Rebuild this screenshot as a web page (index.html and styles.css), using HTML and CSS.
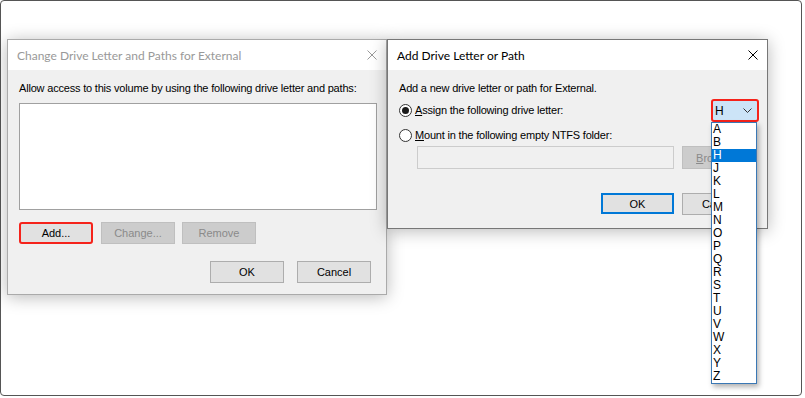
FILE: index.html
```html
<!DOCTYPE html>
<html lang="en">
<head>
    <meta charset="UTF-8">
    <meta name="viewport" content="width=device-width, initial-scale=1.0">
    <title>Add Drive Letter or Path</title>
    <link rel="stylesheet" href="styles.css">
</head>
<body>
    <div class="desktop">

        <!-- Change Drive Letter dialog (inactive) -->
        <div class="window win-paths">
            <div class="titlebar">
                <span class="title">Change Drive Letter and Paths for External</span>
                <svg class="close" width="10" height="10" viewBox="0 0 10 10"><path d="M0.5 0.5L9.5 9.5M9.5 0.5L0.5 9.5" stroke="currentColor" stroke-width="1"/></svg>
            </div>
            <div class="content">
                <p class="label">Allow access to this volume by using the following drive letter and paths:</p>
                <div class="listbox"></div>
                <div class="actions">
                    <button class="btn marked">Add...</button>
                    <button class="btn" disabled>Change...</button>
                    <button class="btn" disabled>Remove</button>
                </div>
                <div class="footer">
                    <button class="btn">OK</button>
                    <button class="btn">Cancel</button>
                </div>
            </div>
        </div>

        <!-- Add Drive Letter or Path dialog (active) -->
        <div class="window win-add">
            <div class="titlebar">
                <span class="title">Add Drive Letter or Path</span>
                <svg class="close" width="10" height="10" viewBox="0 0 10 10"><path d="M0.5 0.5L9.5 9.5M9.5 0.5L0.5 9.5" stroke="currentColor" stroke-width="1"/></svg>
            </div>
            <div class="content">
                <p class="label">Add a new drive letter or path for External.</p>
                <div class="option option-letter">
                    <label class="radio-label"><span class="radio checked"></span><span><u>A</u>ssign the following drive letter:</span></label>
                    <div class="combo">
                        <span>H</span>
                        <svg width="9" height="5" viewBox="0 0 9 5"><path d="M0.5 0.5L4.5 4.5L8.5 0.5" fill="none" stroke="#333" stroke-width="1"/></svg>
                    </div>
                </div>
                <div class="option">
                    <label class="radio-label"><span class="radio"></span><span><u>M</u>ount in the following empty NTFS folder:</span></label>
                </div>
                <div class="folder-row">
                    <div class="field"></div>
                    <button class="btn" disabled><u>B</u>rowse...</button>
                </div>
                <div class="footer">
                    <button class="btn default">OK</button>
                    <button class="btn">Cancel</button>
                </div>
            </div>

            <ul class="droplist">
                <li>A</li>
                <li>B</li>
                <li class="selected">H</li>
                <li>J</li>
                <li>K</li>
                <li>L</li>
                <li>M</li>
                <li>N</li>
                <li>O</li>
                <li>P</li>
                <li>Q</li>
                <li>R</li>
                <li>S</li>
                <li>T</li>
                <li>U</li>
                <li>V</li>
                <li>W</li>
                <li>X</li>
                <li>Y</li>
                <li>Z</li>
            </ul>
        </div>

    </div>
</body>
</html>
```

FILE: styles.css
```css
body{
    margin: 0;
    padding: 0;
    font-family: "Liberation Sans", Arial, sans-serif;
    font-size: 11px;
    color: #000;
}
.desktop{
    position: relative;
    width: 802px;
    height: 396px;
    box-sizing: border-box;
    border: 1px solid #555;
    border-radius: 4px;
    background-color: #fff;
}

/* windows */
.window{
    position: absolute;
    box-sizing: border-box;
    background-color: #f0f0f0;
    border: 1px solid #aaa;
    box-shadow: 0 2px 16px rgba(0, 0, 0, 0.28);
}
.win-paths{
    left: 6px;
    top: 38px;
    width: 380px;
    height: 256px;
}
.win-add{
    left: 386px;
    top: 38px;
    width: 381px;
    height: 190px;
    border-color: #777;
}
.titlebar{
    display: flex;
    align-items: center;
    justify-content: space-between;
    height: 30px;
    padding: 0 9px 0 9px;
    background-color: #fff;
    font-family: Lato, "Noto Sans", sans-serif;
    font-size: 12px;
}
.win-paths .titlebar{
    color: #999;
}
.close{
    display: block;
}
.content{
    padding: 0 0 0 11px;
}
.label{
    margin: 12px 0 0 0;
    line-height: 13px;
    letter-spacing: -0.19px;
}

/* buttons */
.btn{
    box-sizing: border-box;
    width: 74px;
    height: 22px;
    padding: 0;
    background-color: #e1e1e1;
    border: 1px solid #adadad;
    font-family: "Liberation Sans", Arial, sans-serif;
    font-size: 11px;
    color: #000;
}
.btn:disabled{
    background-color: #cccccc;
    border-color: #bfbfbf;
    color: #8a8a8a;
}
.btn.marked{
    border: 2px solid #f5231b;
    border-radius: 3px;
}
.btn.default{
    width: 73px;
    height: 21px;
    border: 2px solid #0078d7;
}

/* left dialog */
.listbox{
    box-sizing: border-box;
    width: 358px;
    height: 107px;
    margin-top: 8px;
    background-color: #fff;
    border: 1px solid #a0a0a0;
}
.actions{
    display: flex;
    gap: 8px;
    margin-top: 12px;
}
.actions .btn:last-child{
    margin-left: -1px;
}
.footer{
    display: flex;
    justify-content: flex-end;
}
.win-paths .footer{
    gap: 13px;
    margin-top: 17px;
    padding-right: 15px;
}

/* right dialog */
.option{
    display: flex;
    align-items: center;
    justify-content: space-between;
    height: 13px;
    margin-top: 7px;
    padding-right: 8px;
}
.option-letter{
    height: 23px;
    margin-top: 4px;
}
.radio-label{
    display: flex;
    align-items: center;
    gap: 3px;
    line-height: 13px;
    letter-spacing: -0.19px;
}
.radio{
    position: relative;
    box-sizing: border-box;
    width: 13px;
    height: 13px;
    border: 1px solid #333;
    border-radius: 50%;
    background-color: #fff;
}
.radio.checked::after{
    content: "";
    position: absolute;
    left: 2px;
    top: 2px;
    width: 7px;
    height: 7px;
    border-radius: 50%;
    background-color: #1a1a1a;
}
.combo{
    display: flex;
    align-items: center;
    justify-content: space-between;
    box-sizing: border-box;
    width: 48px;
    height: 23px;
    padding: 0 5px 0 2px;
    border: 2px solid #f5231b;
    border-radius: 3px;
    background-color: #cce4f7;
    font-size: 12px;
}
.folder-row{
    display: flex;
    gap: 8px;
    margin-top: 4px;
    padding-left: 18px;
}
.field{
    box-sizing: border-box;
    width: 257px;
    height: 23px;
    background-color: #f0f0f0;
    border: 1px solid #ccc;
}
.folder-row .btn{
    height: 23px;
}
.win-add .footer{
    gap: 8px;
    margin-top: 24px;
    padding-right: 11px;
}

/* open drop-down of the combo */
.droplist{
    position: absolute;
    left: 323px;
    top: 82px;
    box-sizing: border-box;
    width: 46px;
    margin: 0;
    padding: 0;
    list-style: none;
    background-color: #fff;
    border: 1px solid #3a78b5;
    box-shadow: 2px 3px 5px rgba(0, 0, 0, 0.3);
    font-size: 12px;
}
.droplist li{
    height: 13px;
    line-height: 13px;
    padding-left: 1px;
}
.droplist .selected{
    background-color: #0078d7;
    color: #fff;
}
```
